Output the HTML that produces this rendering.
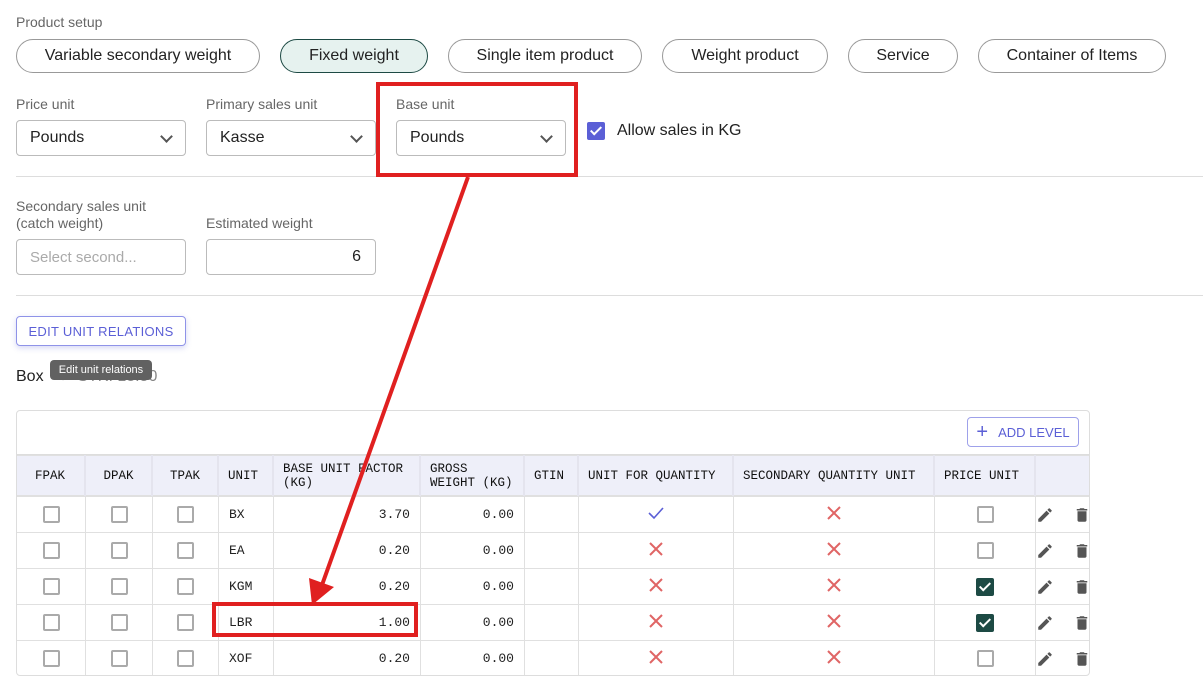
<!DOCTYPE html><html><head><style>
body{margin:0;width:1203px;height:680px;overflow:hidden;background:#fff;font-family:"Liberation Sans",sans-serif;color:#222;position:relative}
.a{position:absolute}
.lbl{font-size:14px;color:#666}
.pill{position:absolute;top:39px;height:34px;border:1px solid #999;border-radius:18px;font-size:16px;display:flex;align-items:center;justify-content:center;box-sizing:border-box;color:#222}
.sel{position:absolute;height:36px;width:170px;border:1px solid #bbb;border-radius:4px;box-sizing:border-box;font-size:16px;padding-left:13px;display:flex;align-items:center}
.chev{position:absolute;right:14px;top:11px;width:7px;height:7px;border-right:2px solid #555;border-bottom:2px solid #555;transform:rotate(45deg)}
.hr{position:absolute;left:16px;right:0;height:1px;background:#ddd}
table{border-collapse:collapse;font-family:"Liberation Mono",monospace;font-size:13px;table-layout:fixed}
td,th{border:1px solid #e0e0e0;padding:0 10px;height:36px;box-sizing:border-box}
th{background:#eeeff9;font-weight:normal;text-align:left;height:40px;border-left:none;border-right:2px solid #e4e4ee;line-height:14px;color:#111;font-size:12.5px;padding:0 9px}
.cb{display:inline-block;width:17px;height:17px;border:2px solid #aaa;border-radius:2px;box-sizing:border-box;vertical-align:middle}
.cbk{display:inline-block;width:18px;height:18px;background:#1d4a44;border-radius:2px;vertical-align:middle;position:relative}
.cbk:after{content:"";position:absolute;left:6px;top:2px;width:4px;height:9px;border-right:2px solid #fff;border-bottom:2px solid #fff;transform:rotate(45deg)}
.c{text-align:center}.r{text-align:right}
.ic{padding:0;position:relative}
.ic svg{position:absolute;top:9px}
</style></head><body>
<div class="a lbl" style="left:16px;top:14px">Product setup</div>
<div class="pill" style="left:16px;width:244px">Variable secondary weight</div>
<div class="pill" style="left:280px;width:148px;background:#e6f2ef;border-color:#1d4a44">Fixed weight</div>
<div class="pill" style="left:448px;width:194px">Single item product</div>
<div class="pill" style="left:662px;width:166px">Weight product</div>
<div class="pill" style="left:848px;width:110px">Service</div>
<div class="pill" style="left:978px;width:188px">Container of Items</div>

<div class="a lbl" style="left:16px;top:96px">Price unit</div>
<div class="a lbl" style="left:206px;top:96px">Primary sales unit</div>
<div class="a lbl" style="left:396px;top:96px">Base unit</div>
<div class="sel" style="left:16px;top:120px">Pounds<span class="chev"></span></div>
<div class="sel" style="left:206px;top:120px">Kasse<span class="chev"></span></div>
<div class="sel" style="left:396px;top:120px">Pounds<span class="chev"></span></div>
<div class="a" style="left:587px;top:122px;width:18px;height:18px;background:#5b5fd6;border-radius:2px"><div style="position:absolute;left:6px;top:2px;width:4px;height:9px;border-right:2px solid #fff;border-bottom:2px solid #fff;transform:rotate(45deg)"></div></div>
<div class="a" style="left:617px;top:122px;font-size:16px">Allow sales in KG</div>
<div class="hr" style="top:176px"></div>

<div class="a lbl" style="left:16px;top:198px;line-height:17px">Secondary sales unit<br>(catch weight)</div>
<div class="a lbl" style="left:206px;top:215px">Estimated weight</div>
<div class="sel" style="left:16px;top:239px;color:#aaa;font-size:15px">Select second...</div>
<div class="sel" style="left:206px;top:239px;justify-content:flex-end;padding-right:14px">6</div>
<div class="hr" style="top:295px"></div>

<div class="a" style="left:16px;top:316px;width:170px;height:30px;border:1px solid #8f93e8;border-radius:4px;box-sizing:border-box;box-shadow:0 2px 6px rgba(90,95,214,.25);color:#5b5fd6;font-size:13px;display:flex;align-items:center;justify-content:center;letter-spacing:.3px">EDIT UNIT RELATIONS</div>
<div class="a" style="left:16px;top:368px;font-size:16px">Box <span style="color:#888">&nbsp;→&nbsp; STK: 18.50</span></div>
<div class="a" style="left:50px;top:360px;width:102px;height:20px;background:#616161;border-radius:4px;color:#fff;font-size:11px;display:flex;align-items:center;justify-content:center">Edit unit relations</div>

<div class="a" style="left:16px;top:410px;width:1074px;height:266px;border:1px solid #ddd;border-radius:4px;box-sizing:border-box;overflow:hidden">
<div style="height:43px;position:relative;border-bottom:1px solid #ddd"><div style="position:absolute;right:10px;top:6px;width:112px;height:30px;border:1px solid #9ea1ea;border-radius:4px;box-sizing:border-box;color:#5b5fd6;font-size:13px;display:flex;align-items:center;justify-content:center"><span style="font-size:20px;margin-right:10px">+</span>ADD LEVEL</div></div>
<table style="width:1074px;margin-left:-1px">
<colgroup><col style="width:69px"><col style="width:67px"><col style="width:66px"><col style="width:55px"><col style="width:147px"><col style="width:104px"><col style="width:54px"><col style="width:155px"><col style="width:201px"><col style="width:101px"><col style="width:55px"></colgroup>
<tr><th class="c">FPAK</th><th class="c">DPAK</th><th class="c">TPAK</th><th>UNIT</th><th>BASE UNIT FACTOR (KG)</th><th>GROSS WEIGHT (KG)</th><th>GTIN</th><th>UNIT FOR QUANTITY</th><th>SECONDARY QUANTITY UNIT</th><th>PRICE UNIT</th><th></th></tr>
</table>
<table style="width:1074px;margin-left:-1px" id="t"></table>
</div>
<script>
var rows=[["BX","3.70",1,0],["EA","0.20",0,0],["KGM","0.20",0,1],["LBR","1.00",0,1],["XOF","0.20",0,0]];
var X='<svg width="16" height="16" viewBox="0 0 16 16"><path d="M2 2L14 14M14 2L2 14" stroke="#e06565" stroke-width="2"/></svg>';
var V='<svg width="18" height="16" viewBox="0 0 18 16"><path d="M2 8L7 13L16 3" stroke="#5b5fd6" stroke-width="1.6" fill="none"/></svg>';
var P='<svg style="left:0" width="18" height="18" viewBox="0 0 24 24"><path d="M3 17.25V21h3.75L17.81 9.94l-3.75-3.75L3 17.25zM20.71 7.04a1 1 0 000-1.41l-2.34-2.34a1 1 0 00-1.41 0l-1.83 1.83 3.75 3.75 1.83-1.83z" fill="#555"/></svg>';
var T='<svg style="left:37px" width="18" height="18" viewBox="0 0 24 24"><path d="M6 19c0 1.1.9 2 2 2h8c1.1 0 2-.9 2-2V7H6v12zM19 4h-3.5l-1-1h-5l-1 1H5v2h14V4z" fill="#555"/></svg>';
var h='<colgroup><col style="width:69px"><col style="width:67px"><col style="width:66px"><col style="width:55px"><col style="width:147px"><col style="width:104px"><col style="width:54px"><col style="width:155px"><col style="width:201px"><col style="width:101px"><col style="width:55px"></colgroup>';
rows.forEach(function(r){h+='<tr><td class="c"><span class="cb"></span></td><td class="c"><span class="cb"></span></td><td class="c"><span class="cb"></span></td><td>'+r[0]+'</td><td class="r">'+r[1]+'</td><td class="r">0.00</td><td></td><td class="c">'+(r[2]?V:X)+'</td><td class="c">'+X+'</td><td class="c">'+(r[3]?'<span class="cbk"></span>':'<span class="cb"></span>')+'</td><td class="ic">'+P+T+'</td></tr>';});
document.getElementById('t').innerHTML=h;
</script>

<div class="a" style="left:376px;top:82px;width:202px;height:95px;border:4px solid #e02020;box-sizing:border-box"></div>
<div class="a" style="left:212px;top:602px;width:206px;height:35px;border:4px solid #e02020;box-sizing:border-box"></div>
<svg class="a" style="left:0;top:0" width="1203" height="680"><line x1="468" y1="177" x2="322" y2="585" stroke="#e02020" stroke-width="4"/><polygon points="312,605 309,578 334,587" fill="#e02020"/></svg>
</body></html>
